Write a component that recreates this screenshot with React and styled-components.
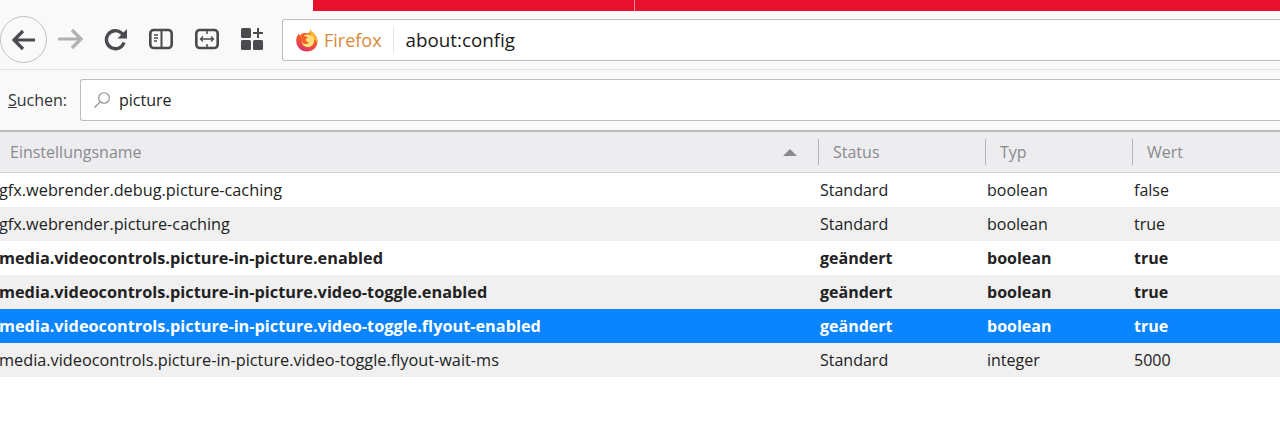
import React from "react";
import styled, { createGlobalStyle } from "styled-components";

const GlobalStyle = createGlobalStyle`
  html, body {
    margin: 0;
    background: #fff;
    font-family: "Open Sans", "Noto Sans", sans-serif;
  }
`;

const rows = [
  { name: "gfx.webrender.debug.picture-caching", status: "Standard", type: "boolean", value: "false" },
  { name: "gfx.webrender.picture-caching", status: "Standard", type: "boolean", value: "true" },
  { name: "media.videocontrols.picture-in-picture.enabled", status: "geändert", type: "boolean", value: "true", changed: true },
  { name: "media.videocontrols.picture-in-picture.video-toggle.enabled", status: "geändert", type: "boolean", value: "true", changed: true },
  { name: "media.videocontrols.picture-in-picture.video-toggle.flyout-enabled", status: "geändert", type: "boolean", value: "true", changed: true, selected: true },
  { name: "media.videocontrols.picture-in-picture.video-toggle.flyout-wait-ms", status: "Standard", type: "integer", value: "5000" },
];

function FirefoxLogo() {
  return (
    <svg width="24" height="24" viewBox="0 0 24 24">
      <defs>
        <linearGradient id="fx" x1="0.75" y1="0" x2="0.35" y2="1">
          <stop offset="0" stopColor="#ff9a2a" />
          <stop offset="0.55" stopColor="#f2552c" />
          <stop offset="1" stopColor="#d9336e" />
        </linearGradient>
      </defs>
      <path
        d="M15 .500c.8 3 3.400 4 5.200 6.500C21.800 9.200 22.500 11 22.500 13.500 22.500 19.300 17.800 23.500 12 23.500 6 23.500 1.200 18.800 1.200 13 1.200 9.800 2.300 7.200 4 5.200c.1 1.100.5 2 1.200 2.600C6.400 5.600 8.500 4.600 10.800 5 15 5.400 16 3.500 15 .500z"
        fill="url(#fx)"
      />
      <path d="M15 .500c.8 3 3.400 4 5.200 6.500 1.400 2 2 4 2 6.500l-5.700-4C16.800 6.500 14.500 4 15 .500z" fill="#ffb52e" />
      <circle cx="12.800" cy="12.800" r="6.400" fill="#ffe27f" />
      <path d="M5.200 7.800C6.400 5.600 8.500 4.600 10.800 5c-1.100.9-1.900 1.700-2 2.700 1 .7 3 .6 3.900 1.300.3 1-1 1.700-2 2.100.2 2 1.500 3.500 3.600 3.800-2.700 1.800-6 1.300-7.900-1.200-1.200-1.700-1.600-4-1.200-5.900z" fill="#f4632a" />
    </svg>
  );
}

function App() {
  return (
    <>
      <GlobalStyle />
      <Chrome>
        <TabStrip>
          <RedTab $width={321} />
          <RedTab />
        </TabStrip>
        <Toolbar>
          <BackButton>
            <svg width="28" height="28" viewBox="0 0 28 28" fill="none" stroke="#4a4a4f" strokeWidth="3.200">
              <path d="M25 14H4M13 5l-9 9 9 9" />
            </svg>
          </BackButton>
          <ToolIcon $width={28} $gap={9}>
            <svg width="26" height="24" viewBox="0 0 26 24" fill="none" stroke="#b1b1b3" strokeWidth="3.200">
              <path d="M1 12h23M15 3l9 9-9 9" />
            </svg>
          </ToolIcon>
          <ToolIcon $width={24} $gap={20}>
            <svg width="24" height="24" viewBox="0 0 24 24" fill="none" stroke="#4a4a4f" strokeWidth="3.400">
              <path d="M20 15.500A9 9 0 1 1 17.500 6l3 3" />
              <path d="M23 2v9.500h-9.500z" fill="#4a4a4f" stroke="none" />
            </svg>
          </ToolIcon>
          <ToolIcon $width={24} $gap={21}>
            <svg width="24" height="22" viewBox="0 0 24 22" fill="none" stroke="#4a4a4f">
              <rect x="1.300" y="2" width="21.400" height="18" rx="3.500" strokeWidth="2.600" />
              <path d="M12.500 2v18" strokeWidth="2" />
              <path d="M5 7h4M5 10h4M5 13h3" strokeWidth="1.300" />
            </svg>
          </ToolIcon>
          <ToolIcon $width={24} $gap={22}>
            <svg width="24" height="22" viewBox="0 0 24 22" fill="none" stroke="#4a4a4f">
              <rect x="1.300" y="2" width="21.400" height="18" rx="3.500" strokeWidth="2.600" />
              <path d="M12 2v4M12 16v4" strokeWidth="1.500" />
              <path d="M5.500 11h13M8 8.500 5.500 11 8 13.500M16 8.500l2.500 2.500-2.500 2.500" strokeWidth="1.300" />
            </svg>
          </ToolIcon>
          <ToolIcon $width={24} $gap={21}>
            <svg width="24" height="24" viewBox="0 0 24 24" fill="#4a4a4f">
              <rect x="1" y="1" width="10" height="10" rx="1.500" />
              <rect x="1" y="13" width="10" height="10" rx="1.500" />
              <rect x="13" y="13" width="10" height="10" rx="1.500" />
              <path d="M17 1h2v4h4v2h-4v4h-2V7h-4V5h4z" />
            </svg>
          </ToolIcon>
          <AddressBar>
            <Identity>
              <FirefoxLogo />
              <Brand>Firefox</Brand>
            </Identity>
            <AddressText>about:config</AddressText>
          </AddressBar>
        </Toolbar>
        <SearchRow>
          <SearchLabel>
            <u>S</u>uchen:
          </SearchLabel>
          <SearchBox>
            <svg width="18" height="18" viewBox="0 0 18 18" fill="none" stroke="#8a8a8e" strokeWidth="1.100">
              <circle cx="11" cy="7" r="5.300" />
              <path d="M7.200 10.800 1.500 16.500" />
            </svg>
            <span>picture</span>
          </SearchBox>
        </SearchRow>
      </Chrome>
      <Table>
        <HeaderRow>
          <NameHead>
            Einstellungsname
            <SortArrow />
          </NameHead>
          <HeadCell>Status</HeadCell>
          <HeadCell>Typ</HeadCell>
          <HeadCell>Wert</HeadCell>
        </HeaderRow>
        {rows.map((row, i) => (
          <Row key={row.name} $odd={i % 2 === 1} $changed={row.changed} $selected={row.selected}>
            <NameCell>{row.name}</NameCell>
            <Cell>{row.status}</Cell>
            <Cell>{row.type}</Cell>
            <Cell>{row.value}</Cell>
          </Row>
        ))}
      </Table>
    </>
  );
}

export default App;

const Chrome = styled.div`
  background: #f9f9fa;
`;

const TabStrip = styled.div`
  height: 11px;
  margin-left: 313px;
  display: flex;
  gap: 1px;
  background: #f08a96;
`;

const RedTab = styled.div`
  background: #e8112d;
  flex: ${(p) => (p.$width ? `0 0 ${p.$width}px` : "1")};
`;

const Toolbar = styled.div`
  height: 58px;
  display: flex;
  align-items: center;
  border-bottom: 1px solid #e2e2e3;
`;

const BackButton = styled.div`
  width: 47px;
  height: 47px;
  margin-top: -1px;
  box-sizing: border-box;
  border: 1px solid #c0c0c2;
  border-radius: 50%;
  display: flex;
  align-items: center;
  justify-content: center;
  flex: none;
`;

const ToolIcon = styled.div`
  width: ${(p) => p.$width}px;
  margin-left: ${(p) => p.$gap}px;
  margin-top: -2px;
  display: flex;
  align-items: center;
  justify-content: center;
  flex: none;
`;

const AddressBar = styled.div`
  flex: 1;
  height: 42px;
  margin-left: 18px;
  margin-top: -1px;
  box-sizing: border-box;
  background: #fff;
  border: 1px solid #bdbdbf;
  border-right: none;
  border-radius: 3px 0 0 3px;
  display: flex;
  align-items: center;
  padding-left: 12px;
`;

const Identity = styled.div`
  display: flex;
  align-items: center;
  gap: 5px;
  height: 26px;
  padding-right: 11px;
  border-right: 1px solid #e3e3e3;
`;

const Brand = styled.span`
  font-size: 18px;
  color: #d98a3d;
`;

const AddressText = styled.span`
  margin-left: 12px;
  font-size: 18.800px;
  color: #1a1a1a;
`;

const SearchRow = styled.div`
  height: 60px;
  display: flex;
  align-items: center;
  padding-left: 8px;
`;

const SearchLabel = styled.label`
  width: 72px;
  font-size: 16px;
  color: #333;
  flex: none;
`;

const SearchBox = styled.div`
  flex: 1;
  height: 42px;
  box-sizing: border-box;
  background: #fff;
  border: 1px solid #bdbdbf;
  border-right: none;
  border-radius: 3px 0 0 3px;
  display: flex;
  align-items: center;
  gap: 8px;
  padding-left: 12px;
  font-size: 16px;
  color: #222;
`;

const Table = styled.div`
  border-top: 2px solid #bdbdbf;
  font-size: 16px;
`;

const columns = "818px 167px 147px 1fr";

const HeaderRow = styled.div`
  display: grid;
  grid-template-columns: ${columns};
  height: 40px;
  align-items: center;
  background: #ededf0;
  border-bottom: 1px solid #d4d4d6;
  color: #8a8a8e;
`;

const HeadCell = styled.div`
  height: 26px;
  line-height: 26px;
  padding-left: 14px;
  border-left: 1.500px solid #b4b4b6;
`;

const NameHead = styled.div`
  display: flex;
  align-items: center;
  justify-content: space-between;
  padding: 0 21px 0 10px;
`;

const SortArrow = styled.span`
  width: 0;
  height: 0;
  border-left: 7px solid transparent;
  border-right: 7px solid transparent;
  border-bottom: 7px solid #8a8a8e;
`;

const Row = styled.div`
  display: grid;
  grid-template-columns: ${columns};
  height: 34px;
  align-items: center;
  background: ${(p) => (p.$selected ? "#0a84ff" : p.$odd ? "#f0f0f0" : "#fff")};
  color: ${(p) => (p.$selected ? "#fff" : "#222")};
  font-weight: ${(p) => (p.$changed ? 700 : 400)};
`;

const Cell = styled.div`
  padding-left: 2px;
  white-space: nowrap;
`;

const NameCell = styled.div`
  font-size: 16.300px;
  text-indent: -1px;
  white-space: nowrap;
  overflow: hidden;
`;
